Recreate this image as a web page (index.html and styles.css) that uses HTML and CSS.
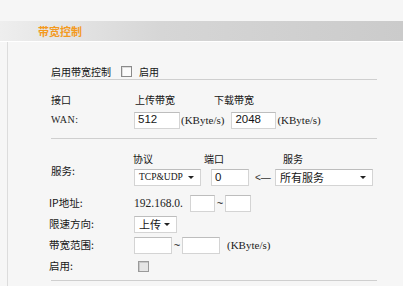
FILE: index.html
```html
<!DOCTYPE html>
<html lang="zh">
<head>
<meta charset="utf-8">
<link rel="stylesheet" href="styles.css">
</head>
<body>
<div class="page">
  <div class="titlebar"><span class="title">带宽控制</span></div>
  <div class="panel">
    <div class="sec sec1">
      <div class="row r-enable">
        <span>启用带宽控制</span>
        <span class="chk"></span>
        <span class="txt">启用</span>
      </div>
    </div>
    <div class="sec sec2">
      <div class="row r-head2">
        <span class="lbl">接口</span>
        <span class="h-up">上传带宽</span>
        <span class="h-down">下载带宽</span>
      </div>
      <div class="row r-wan">
        <span class="lbl small wan">WAN:</span>
        <span class="inp w46">512</span>
        <span class="small unit">(KByte/s)</span>
        <span class="inp w45 ml7">2048</span>
        <span class="small unit">(KByte/s)</span>
      </div>
    </div>
    <div class="sec sec3">
      <div class="svc">
        <span class="lbl svc-lbl">服务:</span>
        <div class="svc-body">
          <div class="row r-head3">
            <span class="h-proto">协议</span>
            <span class="h-port">端口</span>
            <span class="h-svc">服务</span>
          </div>
          <div class="row r-ctl">
            <span class="sel w67"><span class="serif">TCP&amp;UDP</span><span class="arrow"></span></span>
            <span class="inp w38 ml10">0</span>
            <span class="larrow">&lt;—</span>
            <span class="sel w98"><span class="seltxt">所有服务</span><span class="arrow"></span></span>
          </div>
        </div>
      </div>
      <div class="row r-std">
        <span class="lbl lbl3">IP地址:</span>
        <span class="small ip">192.168.0.</span>
        <span class="inp w25"></span>
        <span class="tilde">~</span>
        <span class="inp w26"></span>
      </div>
      <div class="row r-std">
        <span class="lbl lbl3">限速方向:</span>
        <span class="sel w43"><span class="seltxt">上传</span><span class="arrow"></span></span>
      </div>
      <div class="row r-std">
        <span class="lbl lbl3">带宽范围:</span>
        <span class="inp w38"></span>
        <span class="tilde">~</span>
        <span class="inp w38"></span>
        <span class="small unit2">(KByte/s)</span>
      </div>
      <div class="row r-std">
        <span class="lbl lbl3">启用:</span>
        <span class="chk chk2"></span>
      </div>
    </div>
  </div>
</div>
</body>
</html>
```

FILE: styles.css
```css
html, body {
  margin: 0;
  padding: 0;
  background: #f6f6f6;
}
body {
  font-family: "Noto Sans CJK SC", "Noto Sans", sans-serif;
  font-size: 10px;
  line-height: 1;
  color: #151515;
  width: 403px;
  height: 286px;
  overflow: hidden;
}
.page {
  padding-top: 21px;
}
.titlebar {
  height: 20px;
  background: linear-gradient(to right, #eeeeee 0%, #d6d6d6 40%, #cbcbcb 100%);
  border-bottom: 1px solid #ffffff;
  display: flex;
  align-items: center;
  padding-left: 38px;
}
.title {
  color: #f39a1f;
  font-size: 11px;
  font-weight: 700;
}
.panel {
  margin-left: 7px;
  border-left: 1px solid #dcdcdc;
  padding-left: 43px;
  height: 244px;
}
.sec {
  width: 326px;
  border-bottom: 1px solid #cfcfcf;
}
.row {
  display: flex;
  align-items: center;
  white-space: nowrap;
}
.sec1 {
  padding-top: 22px;
}
.r-enable {
  height: 15px;
}
.chk {
  display: inline-block;
  flex: none;
  width: 9px;
  height: 9px;
  margin-left: 10px;
  border: 1px solid #8a8a8a;
  background: #fbfbfb;
  box-shadow: inset 1px 1px 0 #dddddd;
}
.txt {
  margin-left: 7px;
}
.chk2 {
  margin-left: 4px;
  background: #e6e6e6;
  border-color: #9a9a9a;
  box-shadow: inset 1px 1px 0 #c8c8c8;
}
.sec2 {
  padding-top: 12px;
  padding-bottom: 8px;
}
.r-head2 {
  height: 16px;
}
.lbl {
  width: 83px;
  flex: none;
}
.h-up {
  width: 79px;
  padding-left: 1px;
}
.r-wan {
  height: 20px;
  margin-top: 2px;
}
.small {
  font-family: "Liberation Serif", serif;
  font-size: 11px;
  color: #222;
}
.wan {
  font-size: 10px;
  letter-spacing: 0.5px;
}
.serif {
  font-family: "Liberation Serif", serif;
  font-size: 9.5px;
}
.inp {
  display: inline-flex;
  align-items: center;
  box-sizing: border-box;
  height: 17px;
  background: #ffffff;
  border: 1px solid #d4d4d4;
  border-top-color: #bdbdbd;
  padding-left: 3px;
  font-family: "Liberation Sans", sans-serif;
  font-size: 11.5px;
  flex: none;
}
.w46 { width: 46px; }
.w45 { width: 45px; }
.w38 { width: 38px; }
.w25 { width: 25px; }
.w26 { width: 26px; }
.ml7 { margin-left: 7px; }
.ml10 { margin-left: 10px; }
.unit { margin-left: 1px; }
.unit2 { margin-left: 7px; }
.sec3 {
  padding-top: 12px;
  padding-bottom: 3px;
}
.svc {
  display: flex;
}
.svc-lbl {
  padding-top: 15px;
  font-size: 10.5px;
}
.svc-body {
  display: flex;
  flex-direction: column;
}
.r-head3 {
  height: 15px;
}
.h-proto { width: 71px; margin-left: -1px; }
.h-port { width: 79px; }
.r-ctl {
  height: 17px;
  margin-top: 3px;
}
.sel {
  display: inline-flex;
  align-items: center;
  justify-content: space-between;
  box-sizing: border-box;
  height: 17px;
  background: #ffffff;
  border: 1px solid #d4d4d4;
  border-top-color: #bdbdbd;
  padding: 0 6px 0 4px;
  flex: none;
}
.seltxt {
  font-size: 11px;
}
.w67 { width: 67px; }
.w98 { width: 98px; }
.w43 { width: 43px; }
.arrow {
  width: 0;
  height: 0;
  border-left: 3px solid transparent;
  border-right: 3px solid transparent;
  border-top: 3px solid #222;
}
.larrow {
  margin-left: 6px;
  width: 20px;
  font-family: "Liberation Sans", sans-serif;
  font-size: 10px;
  color: #333;
}
.r-std {
  height: 21px;
}
.svc + .r-std { margin-top: 7px; }
.lbl3 {
  margin-left: -2px;
  width: 85px;
  font-size: 10.5px;
}
.ip {
  font-size: 11.5px;
  width: 56px;
}
.tilde {
  width: 10px;
  text-align: center;
  font-family: "Liberation Sans", sans-serif;
  font-size: 11px;
}
```
